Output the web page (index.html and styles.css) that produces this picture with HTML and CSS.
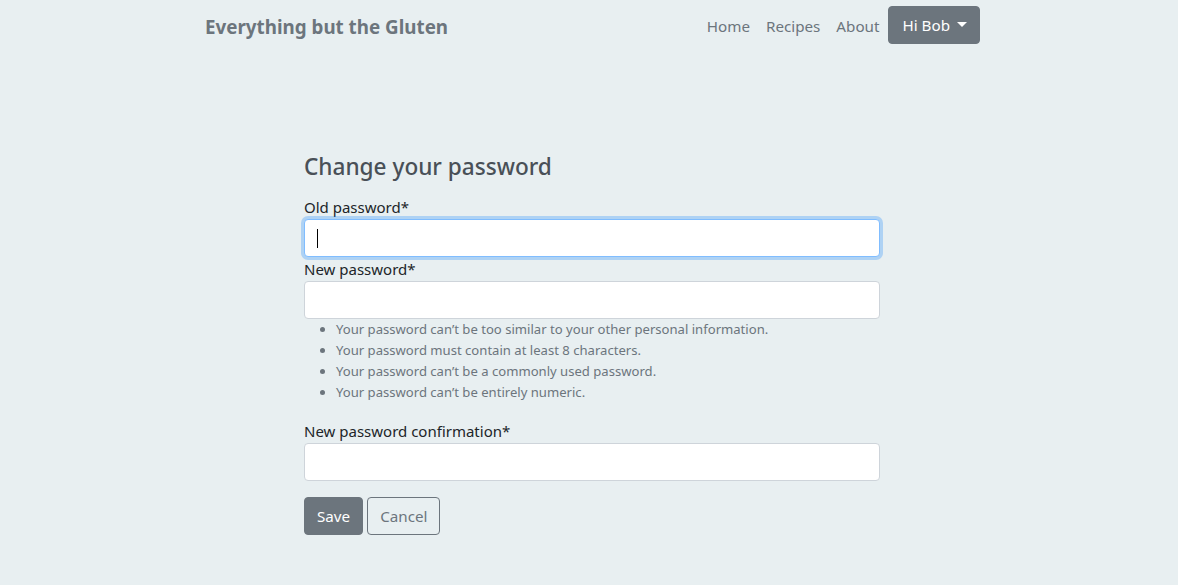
FILE: index.html
```html
<!DOCTYPE html>
<html lang="en">
<head>
<meta charset="utf-8">
<title>Change your password</title>
<link rel="stylesheet" href="styles.css">
</head>
<body>
<nav class="navbar">
  <a class="brand" href="#">Everything but the Gluten</a>
  <div class="nav-links">
    <a class="nav-link" href="#">Home</a>
    <a class="nav-link" href="#">Recipes</a>
    <a class="nav-link" href="#">About</a>
    <button class="user-btn" type="button">Hi Bob <span class="caret"></span></button>
  </div>
</nav>
<main class="content">
  <form class="pw-form">
    <h2 class="title">Change your password</h2>
    <label class="label" for="old">Old password*</label>
    <div class="input focused" id="old"><span class="cursor"></span></div>
    <label class="label" for="new1">New password*</label>
    <div class="input" id="new1"></div>
    <ul class="help">
      <li>Your password can’t be too similar to your other personal information.</li>
      <li>Your password must contain at least 8 characters.</li>
      <li>Your password can’t be a commonly used password.</li>
      <li>Your password can’t be entirely numeric.</li>
    </ul>
    <label class="label" for="new2">New password confirmation*</label>
    <div class="input" id="new2"></div>
    <div class="actions">
      <button class="btn btn-save" type="button">Save</button>
      <button class="btn btn-cancel" type="button">Cancel</button>
    </div>
  </form>
</main>
</body>
</html>
```
FILE: styles.css
```css
* { box-sizing: border-box; }
html, body { margin: 0; padding: 0; }
body {
  background: #e8eff1;
  font-family: "Noto Sans", "Open Sans", sans-serif;
  color: #212529;
  font-size: 15px;
  line-height: 1.5;
}
.navbar {
  width: 775px;
  margin: 0 0 0 205px;
  padding: 6px 0;
  height: 50px;
  display: flex;
  align-items: center;
  justify-content: space-between;
}
.brand {
  font-size: 18.8px;
  font-weight: 700;
  color: #6c757d;
  text-decoration: none;
  margin-top: 4px;
}
.nav-links { display: flex; align-items: center; height: 38px; }
.nav-link {
  color: #6c757d;
  text-decoration: none;
  padding: 0 8px;
  font-size: 15.2px;
  margin-top: 2px;
}
.nav-link:nth-child(3) { padding-right: 9px; }
.user-btn {
  font: inherit;
  font-size: 15.2px;
  background: #6c757d;
  color: #fff;
  border: 1px solid #6c757d;
  border-radius: 4px;
  height: 38px;
  padding: 0 12px 0 13px;
  display: flex;
  align-items: center;
  gap: 7px;
}
.caret {
  width: 0; height: 0;
  border-left: 5px solid transparent;
  border-right: 5px solid transparent;
  border-top: 5px solid #fff;
  margin-top: -1px;
}
.content { padding-top: 102px; }
.pw-form { width: 576px; margin: 0 0 0 304px; }
.title {
  font-size: 22.6px;
  font-weight: 500;
  line-height: 29px;
  color: #495057;
  margin: 0 0 14px;
}
.label { display: block; font-size: 15px; line-height: 24px; color: #212529; }
.input {
  height: 38px;
  background: #fff;
  border: 1px solid #ced4da;
  border-radius: 4px;
  position: relative;
}
.input.focused {
  border-color: #80bdff;
  box-shadow: 0 0 0 3px rgba(0,123,255,0.25);
}
.cursor {
  position: absolute;
  left: 12px; top: 9px;
  width: 1px; height: 19px;
  background: #000;
}
.help {
  margin: 0 0 16px;
  padding-left: 32px;
  font-size: 13.1px;
  line-height: 21px;
  color: #6c757d;
}
.actions { display: flex; gap: 4px; margin-top: 16px; }
.btn {
  font: inherit;
  font-size: 15.2px;
  height: 38px;
  border-radius: 4px;
  padding: 0 12px;
}
.btn-save { background: #6c757d; border: 1px solid #6c757d; color: #fff; }
.btn-cancel { background: transparent; border: 1px solid #6c757d; color: #6c757d; }
```
